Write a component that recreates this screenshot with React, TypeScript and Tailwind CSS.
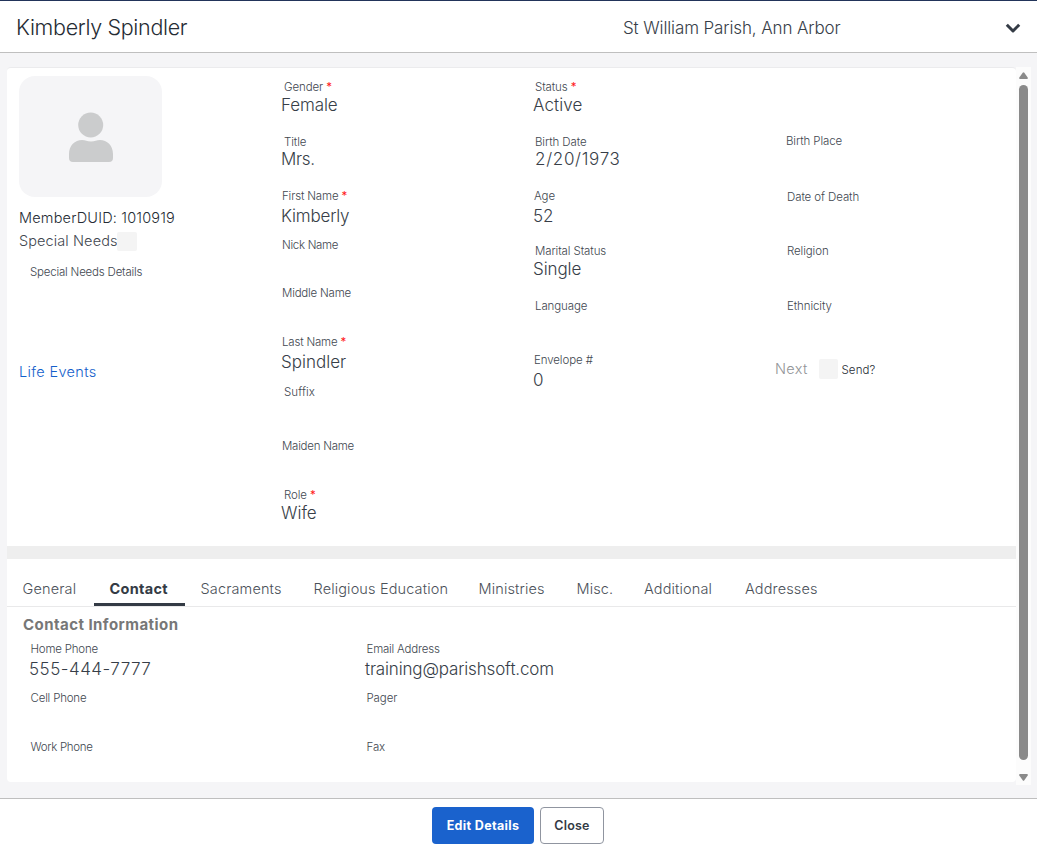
import type { ReactNode } from 'react'

type FieldProps = {
  label: string
  value?: string
  required?: boolean
  className?: string
  labelClass?: string
  valueClass?: string
}

type TabProps = {
  label: string
  className: string
  active?: boolean
}

const personFields: FieldProps[] = [
  { label: 'Gender', value: 'Female', required: true, className: 'h-[55px]', labelClass: 'pl-[3px]', valueClass: '-mt-0.5 tracking-[-0.1px]' },
  { label: 'Title', value: 'Mrs.', className: 'h-[54px]', labelClass: 'pl-[3px]', valueClass: '-mt-[3px] tracking-[-0.3px]' },
  { label: 'First Name', value: 'Kimberly', required: true, className: 'h-[49px]', labelClass: 'pl-px tracking-[-0.15px]', valueClass: 'tracking-[-0.2px]' },
  { label: 'Nick Name', className: 'h-12', labelClass: 'pl-px tracking-[-0.3px]' },
  { label: 'Middle Name', className: 'h-[49px]', labelClass: 'pl-px tracking-[-0.2px]' },
  { label: 'Last Name', value: 'Spindler', required: true, className: 'h-[50px]', labelClass: 'pl-px tracking-[-0.2px]' },
  { label: 'Suffix', className: 'h-[54px]', labelClass: 'pl-[3px] tracking-[0.1px]' },
  { label: 'Maiden Name', className: 'h-[49px]', labelClass: 'pl-px tracking-[-0.25px]' },
  { label: 'Role', value: 'Wife', required: true, labelClass: 'pl-[3px]', valueClass: '-mt-0.5' },
]

const statusFields: FieldProps[] = [
  { label: 'Status', value: 'Active', required: true, className: 'h-[55px]', labelClass: 'pl-0.5', valueClass: '-mt-0.5 tracking-[0.1px]' },
  { label: 'Birth Date', value: '2/20/1973', className: 'h-[54px]', labelClass: 'pl-0.5', valueClass: '-mt-[3px] pl-0.5 tracking-[0.7px]' },
  { label: 'Age', value: '52', className: 'h-[55px]' },
  { label: 'Marital Status', value: 'Single', className: 'h-[55px]', labelClass: 'pl-0.5', valueClass: '-mt-0.5 tracking-[-0.1px]' },
  { label: 'Language', className: 'h-[54px]', labelClass: 'pl-0.5' },
  { label: 'Envelope #', value: '0' },
]

const placeFields: FieldProps[] = [
  { label: 'Birth Place', className: 'h-14', labelClass: 'pl-0' },
  { label: 'Date of Death', className: 'h-[54px]' },
  { label: 'Religion', className: 'h-[55px]' },
  { label: 'Ethnicity', className: 'h-[61px]' },
]

const phoneFields: FieldProps[] = [
  { label: 'Home Phone', value: '555-444-7777', className: 'h-[49px]', labelClass: 'pl-[0.5px] tracking-[-0.2px]', valueClass: '-ml-px tracking-[0.5px]' },
  { label: 'Cell Phone', className: 'h-[49px]', labelClass: 'pl-[0.5px] tracking-[-0.2px]' },
  { label: 'Work Phone', labelClass: 'pl-[0.5px] tracking-[-0.3px]' },
]

const emailFields: FieldProps[] = [
  { label: 'Email Address', value: 'training@parishsoft.com', className: 'h-[49px]', labelClass: 'pl-[0.5px] tracking-[-0.2px]', valueClass: '-ml-px tracking-[-0.16px]' },
  { label: 'Pager', className: 'h-[49px]', labelClass: 'pl-[0.5px]' },
  { label: 'Fax', labelClass: 'pl-[0.5px]' },
]

const tabs: TabProps[] = [
  { label: 'General', className: 'w-[87px] pl-[15.5px]' },
  { label: 'Contact', className: 'w-[91px] pl-[15.5px]', active: true },
  { label: 'Sacraments', className: 'w-[114px] pl-[15.5px]' },
  { label: 'Religious Education', className: 'w-[165px] pl-[14.5px]' },
  { label: 'Ministries', className: 'w-[98px] pl-[14.5px]' },
  { label: 'Misc.', className: 'w-[67px] pl-[14.5px]' },
  { label: 'Additional', className: 'w-[101px] pl-[15px]' },
  { label: 'Addresses', className: 'w-[103px] pl-[15px]' },
]

function Field({ label, value, required, className = '', labelClass = 'pl-px', valueClass = '' }: FieldProps) {
  return (
    <div className={`whitespace-nowrap ${className}`}>
      <div className={`text-[11.5px] leading-4 text-[#41474f] ${labelClass} ${labelClass.includes('tracking') ? '' : 'tracking-[-0.1px]'}`}>
        {label}
        {required && <span className="font-normal text-[#ff1a1a]"> *</span>}
      </div>
      {value && <div className={`text-[17px] leading-6 text-[#373e48] ${valueClass}`}>{value}</div>}
    </div>
  )
}

function FieldColumn({ fields, className, children }: { fields: FieldProps[]; className: string; children?: ReactNode }) {
  return (
    <div className={`flex shrink-0 flex-col ${className}`}>
      {fields.map((field) => (
        <Field key={field.label} {...field} />
      ))}
      {children}
    </div>
  )
}

function Header() {
  return (
    <header className="flex h-[53px] shrink-0 items-center border-t border-b border-t-[#22345a] border-b-[#bfbfbf] bg-white pt-0.5">
      <h1 className="w-[623px] pl-4 text-[21.5px] tracking-[-0.33px] text-[#262c34]">Kimberly Spindler</h1>
      <span className="flex-1 pt-0.5 text-[17px] tracking-[-0.12px] text-[#373e48]">St William Parish, Ann Arbor</span>
      <svg width="16" height="11" viewBox="0 0 16 11" fill="none" stroke="#343b45" strokeWidth="3" className="mt-px mr-4">
        <path d="M1.800 1.800L8 8L14.200 1.800" strokeLinejoin="round" />
      </svg>
    </header>
  )
}

function Profile() {
  return (
    <div className="w-[274px] shrink-0 pt-2 pl-3 whitespace-nowrap">
      <div className="flex h-[121px] w-[143px] justify-center rounded-2xl bg-[#f5f5f7] pt-9">
        <svg width="44" height="50" viewBox="0 0 44 50" fill="#cbcccd">
          <circle cx="21.700" cy="13" r="12.500" />
          <path d="M0 42c0-8.500 6-14 13-14 3.500 0 5 1.500 9 1.500s5.500-1.500 9-1.500c7 0 13 5.500 13 14v4q0 4-4 4H4q-4 0-4-4z" />
        </svg>
      </div>
      <div className="mt-[9px] text-[14.5px] leading-6 tracking-[0.18px] text-[#262c34]">MemberDUID: 1010919</div>
      <div className="-mt-px flex h-6 items-center text-[14.5px] tracking-[0.1px] text-[#41474f]">
        <span className="w-[98px]">Special Needs</span>
        <span className="h-[19px] w-5 rounded-xs bg-[#f4f4f4]" />
      </div>
      <div className="mt-[11px] h-24 pl-[11px] text-[11.5px] leading-4 tracking-[-0.2px] text-[#41474f]">Special Needs Details</div>
      <a className="block text-[14.5px] leading-6 tracking-[0.35px] text-[#1460cb]">Life Events</a>
    </div>
  )
}

function Tabs() {
  return (
    <nav className="flex h-12 border-b border-[#e9e9ea] whitespace-nowrap">
      {tabs.map((tab) => (
        <button
          key={tab.label}
          type="button"
          className={`mt-[7px] h-10 border-b-[3px] pt-[9px] text-left text-[14.5px] ${tab.className} ${
            tab.active ? 'border-[#343b45] font-bold tracking-[0.3px] text-[#343b45]' : 'border-transparent tracking-[0.14px] text-[#4b5159]'
          }`}
        >
          {tab.label}
        </button>
      ))}
    </nav>
  )
}

function Scrollbar() {
  return (
    <div className="flex h-[718px] w-[15px] shrink-0 flex-col items-center bg-[#fcfcfc]">
      <svg width="9" height="7" viewBox="0 0 9 7" fill="#8a8a8a" className="mt-[5px] shrink-0">
        <path d="M3.700.700Q4.500-.400 5.300.700L8.700 5.500Q9.200 7 8 7H1Q-.200 7 .300 5.500z" />
      </svg>
      <div className="mt-1.5 h-[675px] w-[9px] rounded-full bg-[#8a8a8a]" />
      <svg width="9" height="7" viewBox="0 0 9 7" fill="#8a8a8a" className="mt-3.5 shrink-0">
        <path d="M3.700 6.300Q4.500 7.400 5.300 6.300L8.700 1.500Q9.200 0 8 0H1Q-.200 0 .300 1.500z" />
      </svg>
    </div>
  )
}

export default function App() {
  return (
    <div className="flex h-[849px] w-[1037px] flex-col overflow-hidden bg-[#f5f5f7] font-[Inter,sans-serif] font-light">
      <Header />
      <main className="flex h-[745px] shrink-0 pt-3.5 pl-[7px]">
        <div className="h-[715px] w-[1009px] shrink-0 rounded-sm border-t border-[#ebebed] bg-white">
          <section className="flex h-[478px]">
            <Profile />
            <FieldColumn fields={personFields} className="w-[252px] pt-[11px]" />
            <FieldColumn fields={statusFields} className="w-[253px] pt-[11px]" />
            <FieldColumn fields={placeFields} className="pt-[65px]">
              <div className="-ml-[11px] flex h-5 items-center">
                <span className="w-11 text-[14.5px] tracking-[0.3px] text-[#929497]">Next</span>
                <span className="mr-[3.5px] h-5 w-[19px] rounded-xs bg-[#f4f4f4]" />
                <span className="pt-1 text-[11.5px] tracking-[0.1px] text-[#262c34]">Send?</span>
              </div>
            </FieldColumn>
          </section>
          <div className="h-[13px] bg-[#eee]" />
          <Tabs />
          <h2 className="mt-1.5 pl-4 text-[15px] leading-6 font-bold tracking-[0.45px] text-[#777]">Contact Information</h2>
          <div className="mt-1 flex pl-[23px]">
            <FieldColumn fields={phoneFields} className="w-[336px]" />
            <FieldColumn fields={emailFields} className="w-[336px]" />
          </div>
        </div>
        <Scrollbar />
      </main>
      <footer className="flex flex-1 items-start justify-center gap-1.5 border-t border-[#bfbfbf] bg-white pt-2 pr-px text-[12.5px] font-semibold">
        <button type="button" className="h-[37px] w-[102px] rounded bg-[#1a62cd] pt-0.5 font-bold tracking-[0.35px] text-white">
          Edit Details
        </button>
        <button type="button" className="h-[37px] w-16 rounded border border-[#9095a0] bg-white pt-0.5 tracking-[0.2px] text-[#343b45]">
          Close
        </button>
      </footer>
    </div>
  )
}
